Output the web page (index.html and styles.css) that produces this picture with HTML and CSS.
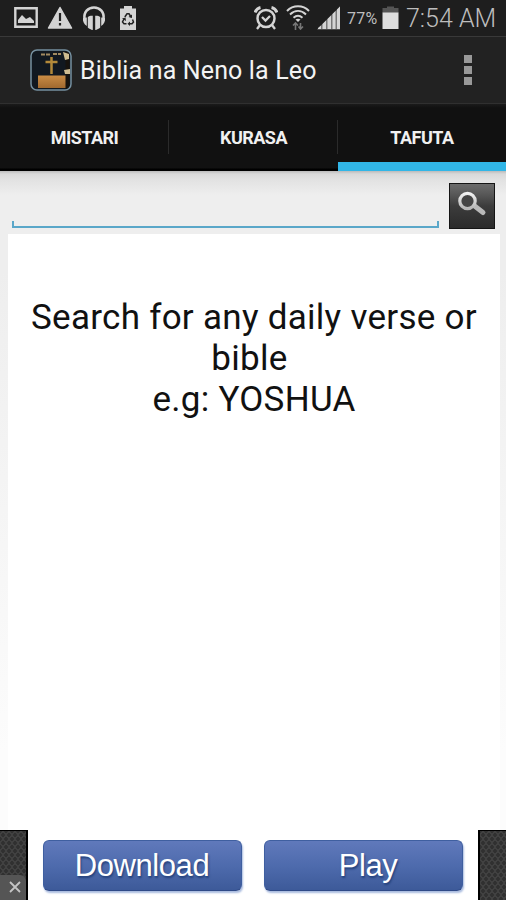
FILE: index.html
```html
<!DOCTYPE html>
<html lang="sw">
<head>
    <meta charset="UTF-8">
    <meta name="viewport" content="width=device-width, initial-scale=1.0">
    <title>Biblia na Neno la Leo</title>
    <link rel="stylesheet" href="styles.css">
</head>
<body>
    <div class="status-bar">
        <div class="notifications">
            <svg width="24" height="24" viewBox="0 0 24 24">
                <path d="M1.3 2.3h21.4v18.4H1.3z" fill="none" stroke="#d4d4d4" stroke-width="2.4"/>
                <path d="M4 17v-3l4-5 4 4 4-2 4 4v2z" fill="#d4d4d4"/>
            </svg>
            <svg width="26" height="24" viewBox="0 0 26 24">
                <path d="M13 1.5L24.5 22h-23z" fill="#d4d4d4" stroke="#d4d4d4" stroke-width="1.5" stroke-linejoin="round"/>
                <path d="M13 7v8M13 17v2.5" stroke="#222" stroke-width="2.2"/>
            </svg>
            <svg width="24" height="24" viewBox="0 0 24 24">
                <path d="M2.5 13C1.500 6 6 1.500 12 1.500S22.500 6 21.500 13" fill="none" stroke="#d4d4d4" stroke-width="2.600"/>
                <path d="M4.800 11.500v8.500C2 18 .5 15.500 1 12zM19.200 11.500v8.500c2.800-2 4.300-4.500 3.800-8z" fill="#d4d4d4"/>
                <path d="M5.800 11c1.500-1 3-1.500 5-1.200V24c-2-.3-3.500-1.200-5-2.500zM18.200 11c-1.500-1-3-1.500-5-1.200V24c2-.3 3.500-1.200 5-2.500z" fill="#d4d4d4"/>
            </svg>
            <svg width="18" height="24" viewBox="0 0 18 24">
                <path d="M1 2.500h4V0h8v2.500h4V24H1z" fill="#d4d4d4"/>
                <path d="M5.800 11l2.200-3.200h2L12 11M13.500 13.500l1 2.500-1.500 1.700h-2.500M7.500 17.700H5L3.500 16l1.500-3" fill="none" stroke="#222" stroke-width="1.500"/>
                <path d="M13 8.500V12l-3.500-1zM11 15.500v4.400l-2.500-2.200zM3 12.500l3.500-1 .5 3.500z" fill="#222"/>
            </svg>
        </div>
        <div class="system">
            <svg class="alarm" width="24" height="24" viewBox="0 0 24 24">
                <g fill="none" stroke="#d4d4d4">
                    <circle cx="12" cy="12.500" r="8.500" stroke-width="2.500"/>
                    <path d="M1 6.500C2 4 4 2 6.500 1.500M23 6.500C22 4 20 2 17.500 1.500" stroke-width="3"/>
                    <path d="M8 11l3.500 3.500L16 10M6 19l-3 4M18 19l3 4" stroke-width="2.300"/>
                </g>
            </svg>
            <svg class="wifi" width="24" height="25" viewBox="0 0 24 25">
                <g fill="none" stroke="#d4d4d4" stroke-width="2">
                    <path d="M1 6C7 -.2 17 -.2 23 6M4 9.500c5-4.600 11-4.600 16 0M7.500 12.700c3-2.500 6-2.500 9 0"/>
                </g>
                <path d="M9.500 14.500c1.500-1 3.500-1 5 0L12 17z" fill="#d4d4d4"/>
                <path d="M9.500 25v-6M7 20.500L9.500 18l2.500 2.500M14.500 18v6M12.500 21.500l2 2.500 2.500-2.500" fill="none" stroke="#777" stroke-width="1.600"/>
            </svg>
            <svg class="signal" width="24" height="24" viewBox="0 0 24 24">
                <path d="M0 23.500L23 .5v23z" fill="#777"/>
                <path d="M1 23v-1l3-2.500V23zM5.500 23v-5L9 14.500V23zM10.500 23V13L14 9.500V23zM15.500 23V8L18.500 5V23zM20 23V3.500L23 .5V23z" fill="#d4d4d4"/>
            </svg>
            <span class="percent">77%</span>
            <svg class="battery" width="17" height="24" viewBox="0 0 17 24">
                <path d="M5 .5h7V2h4.500v5H.5V2H5z" fill="#555"/>
                <path d="M.5 6.500h16V23H.5z" fill="#dedede"/>
            </svg>
            <span class="clock">7:54 AM</span>
        </div>
    </div>

    <div class="action-bar">
        <svg class="app-icon" width="42" height="42" viewBox="0 0 42 42">
            <defs>
                <linearGradient id="wood" x1="0" y1="0" x2="0" y2="1">
                    <stop offset="0" stop-color="#c98c45"/>
                    <stop offset="1" stop-color="#a1692f"/>
                </linearGradient>
            </defs>
            <rect x="1" y="1" width="40" height="40" rx="6" fill="#111820"/>
            <path d="M8 26.500h28V39H8z" fill="url(#wood)"/>
            <path d="M35.500 2v38h3c1 0 1-1 1-2V4z" fill="#17130e"/>
            <path d="M33 3l6 2v5l-4 1zM34 21l6-1v5h-5z" fill="#cfbd91"/>
            <path d="M11 5.500h10M23 5h8" stroke="#a18a60" stroke-width="2" stroke-dasharray="4 1"/>
            <path d="M21.500 8v17M15.500 13h12" stroke="#b2893a" stroke-width="2.500"/>
            <rect x="1" y="1" width="40" height="40" rx="6" fill="none" stroke="#7590a0" stroke-width="1.500"/>
        </svg>
        <h1 class="title">Biblia na Neno la Leo</h1>
        <div class="overflow">
            <span></span>
            <span></span>
            <span></span>
        </div>
    </div>

    <div class="tabs">
        <div class="tab">MISTARI</div>
        <div class="tab">KURASA</div>
        <div class="tab active">TAFUTA</div>
    </div>

    <div class="content">
        <div class="search-row">
            <input class="search-input" type="text">
            <button class="search-button">
                <svg width="46" height="46" viewBox="0 0 46 46">
                    <defs>
                        <linearGradient id="lens" x1="0" y1="0" x2="0" y2="1">
                            <stop offset="0" stop-color="#f2f2f2"/>
                            <stop offset="1" stop-color="#b5b5b5"/>
                        </linearGradient>
                    </defs>
                    <path d="M25 22.500l9 7" stroke="#b9b9b9" stroke-width="5" stroke-linecap="round"/>
                    <circle cx="18.500" cy="18" r="7.700" fill="#444" stroke="url(#lens)" stroke-width="3.200"/>
                </svg>
            </button>
        </div>
        <div class="results">
            <p class="hint first">Search for any daily verse or</p>
            <p class="hint second">bible</p>
            <p class="hint third">e.g: YOSHUA</p>
        </div>
    </div>

    <div class="ad">
        <div class="ad-side">
            <div class="ad-close">
                <svg width="12" height="12" viewBox="0 0 12 12">
                    <path d="M1 1l10 10M11 1L1 11" stroke="#c4c4c4" stroke-width="1.800"/>
                </svg>
            </div>
        </div>
        <div class="ad-body">
            <button class="ad-button download">Download</button>
            <button class="ad-button play">Play</button>
        </div>
        <div class="ad-side right"></div>
    </div>
</body>
</html>
```
FILE: styles.css
```css
* {
    box-sizing: border-box;
}

body {
    display: flex;
    flex-direction: column;
    height: 900px;
    margin: 0;
    overflow: hidden;
    background-color: #eee;
    font-family: Roboto, sans-serif;
}

svg {
    display: block;
    flex-shrink: 0;
}

button {
    border: none;
    padding: 0;
    cursor: pointer;
}

.status-bar {
    display: flex;
    justify-content: space-between;
    height: 36px;
    padding: 6px 9px 0 14px;
    background-color: #1e1e1e;
}

.notifications {
    display: flex;
    gap: 10px;
}

.notifications svg:nth-child(2) {
    margin-left: -1px;
}

.notifications svg:nth-child(3) {
    margin-left: -1px;
}

.notifications svg:nth-child(4) {
    margin-left: 3px;
}

.system {
    display: flex;
    color: #bdbdbd;
}

.wifi {
    margin-left: 8px;
    margin-top: -1px;
}

.signal {
    margin-left: 7px;
}

.percent {
    width: 31px;
    margin-left: 6px;
    font-size: 16px;
    letter-spacing: 0.2px;
    line-height: 25px;
    white-space: nowrap;
}

.battery {
    margin-left: 4px;
}

.clock {
    width: 91px;
    margin-left: 7px;
    font-size: 25px;
    font-weight: 300;
    line-height: 25px;
    white-space: nowrap;
}

.action-bar {
    display: flex;
    align-items: center;
    height: 68px;
    padding: 0 34px 0 30px;
    border-top: 1px solid #393939;
    border-bottom: 1px solid #303030;
    background-color: #222;
}

.title {
    flex: 1;
    margin: 2px 0 0 8px;
    color: #f3f3f3;
    font-size: 25px;
    font-weight: 400;
    letter-spacing: 0.15px;
    line-height: 30px;
}

.overflow {
    display: flex;
    flex-direction: column;
    gap: 3px;
}

.overflow span {
    width: 8px;
    height: 8px;
    background-color: #999;
}

.tabs {
    display: flex;
    height: 67px;
    background: linear-gradient(#1b1b1b, #111 4px, #111 64px, #000 65px);
}

.tab {
    display: flex;
    flex: 1;
    align-items: center;
    justify-content: center;
    background: linear-gradient(#2b2b2b, #2b2b2b) right 16px / 1px 34px no-repeat;
    color: #f0f0f0;
    font-size: 18px;
    font-weight: 700;
    letter-spacing: -0.5px;
}

.tab.active {
    flex: 0 0 168px;
    border-bottom: 9px solid #31b6e7;
    padding-top: 9px;
    background: none;
}

.content {
    display: flex;
    flex: 1;
    flex-direction: column;
    padding: 0 6px 0 8px;
    background: linear-gradient(#bbb, #d9d9d9 3px, #e3e3e3 10px, #eee 24px, #eee 100px, #fcfcfc 580px);
}

.search-row {
    display: flex;
    height: 63px;
    padding: 12px 5px 0 4px;
}

.search-input {
    width: 427px;
    height: 45px;
    border: none;
    padding: 0 8px;
    outline: none;
    background:
        linear-gradient(#5aa7c9, #5aa7c9) left bottom / 2px 7px no-repeat,
        linear-gradient(#5aa7c9, #5aa7c9) right bottom / 2px 7px no-repeat,
        linear-gradient(#5aa7c9, #5aa7c9) left bottom / 100% 2px no-repeat;
}

.search-button {
    width: 46px;
    height: 46px;
    margin-left: 10px;
    border: 1px solid #151515;
    background: linear-gradient(#6b6b6b, #5b5b5b 20%, #3c3c3c 50%, #2b2b2b);
}

.search-button svg {
    margin: -1px;
}

.results {
    flex: 1;
    padding-top: 63px;
    background-color: #fff;
}

.hint {
    margin: 0;
    color: #111;
    font-size: 35px;
    letter-spacing: 0.28px;
    line-height: 41px;
    text-align: center;
    white-space: nowrap;
}

.hint.second {
    padding-right: 9px;
}

.ad {
    display: flex;
    height: 70px;
    background-color: #fff;
}

.ad-side {
    display: flex;
    flex-direction: column;
    justify-content: flex-end;
    width: 29px;
    border-top: 1px solid #000;
    border-right: 2px solid #000;
    background-color: #414141;
    background-image: radial-gradient(#303030 35%, transparent 45%), radial-gradient(#303030 35%, transparent 45%);
    background-position: 0 0, 3px 4px;
    background-size: 6px 8px;
}

.ad-side.right {
    width: 28px;
    border-right: none;
    border-left: 2px solid #000;
}

.ad-close {
    display: flex;
    align-items: center;
    justify-content: center;
    height: 25px;
    border-radius: 0 6px 0 0;
    padding-left: 3px;
    padding-bottom: 2px;
    background-color: #555;
}

.ad-body {
    display: flex;
    flex: 1;
    gap: 22px;
    padding: 10px 15px 0;
}

.ad-button {
    width: 199px;
    height: 51px;
    border: 1px solid #3f5fa0;
    border-bottom-color: #2f4a88;
    border-radius: 6px;
    background: linear-gradient(#6079bb, #4e6bad 50%, #3d5a99);
    box-shadow: 1px 2px 2px #a9bbdf;
    color: #fff;
    font-family: "Liberation Sans", Arial, sans-serif;
    font-size: 31px;
    letter-spacing: -0.4px;
    line-height: 48px;
    text-shadow: 1px 2px 2px #24427c;
}

.download {
    padding-right: 2px;
}

.play {
    padding-left: 8px;
}
```
